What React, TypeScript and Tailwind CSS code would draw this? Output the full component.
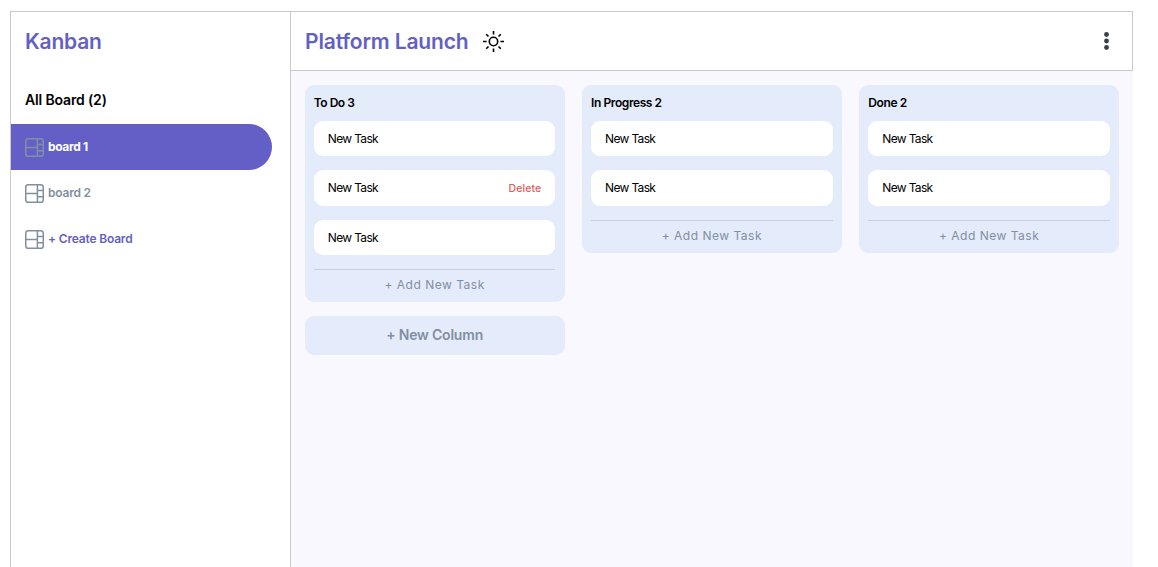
type Task = { title: string; deletable?: boolean };
type Column = {
  name: string;
  tasks: Task[];
  titleClass: string;
};

const columns: Column[] = [
  {
    name: 'To Do',
    tasks: [{ title: 'New Task' }, { title: 'New Task', deletable: true }, { title: 'New Task' }],
    titleClass: 'tracking-[-0.5px]',
  },
  {
    name: 'In Progress',
    tasks: [{ title: 'New Task' }, { title: 'New Task' }],
    titleClass: 'tracking-[-0.42px]',
  },
  {
    name: 'Done',
    tasks: [{ title: 'New Task' }, { title: 'New Task' }],
    titleClass: 'tracking-[-0.4px]',
  },
];

function BoardIcon() {
  return (
    <svg width="19" height="19" viewBox="0 0 19 19" fill="none" stroke="#828fa3" strokeWidth="1.5" className="shrink-0">
      <rect x="0.75" y="0.75" width="17.5" height="17.5" rx="2.6" />
      <path d="M12.4 0.75v17.5M0.75 9.5h11.65M12.4 6.4h5.85M12.4 12.7h5.85" />
    </svg>
  );
}

function SunIcon() {
  return (
    <svg width="21" height="21" viewBox="0 0 21 21" fill="none" stroke="#000" strokeWidth="1.6">
      <circle cx="10.5" cy="10.5" r="4.2" />
      <path d="M10.5 0v3.6M10.5 17.4V21M0 10.5h3.6M17.4 10.5H21M3.2 3.2l2.3 2.3M15.5 15.5l2.3 2.3M17.8 3.2l-2.3 2.3M5.5 15.5l-2.3 2.3" />
    </svg>
  );
}

function DotsIcon() {
  return (
    <svg width="5" height="18" viewBox="0 0 5 18" fill="#3b3f4d">
      <circle cx="2.5" cy="2.5" r="2.4" />
      <circle cx="2.5" cy="9" r="2.4" />
      <circle cx="2.5" cy="15.5" r="2.4" />
    </svg>
  );
}

function Sidebar() {
  return (
    <aside className="flex w-[281px] shrink-0 flex-col border-x border-t border-[#c9cacf] bg-white">
      <h1 className="mt-3.5 pl-3.5 text-[21px] leading-8 font-semibold tracking-[-0.2px] text-[#635fc7]">Kanban</h1>
      <h2 className="mt-8 pl-3.5 text-[14px] leading-5 font-semibold tracking-[-0.15px] text-black">All Board (2)</h2>
      <nav className="mt-3.5 flex flex-col text-[12px] font-semibold">
        <a className="flex h-[46px] w-[261px] items-center gap-1 rounded-r-full bg-[#635fc7] pl-3.5 font-bold tracking-[-0.35px] text-white">
          <BoardIcon />
          <span>board 1</span>
        </a>
        <a className="flex h-[46px] items-center gap-1 pl-3.5 tracking-[-0.2px] text-[#828fa3]">
          <BoardIcon />
          <span>board 2</span>
        </a>
        <a className="flex h-[46px] items-center gap-1 pl-3.5 tracking-[-0.18px] text-[#635fc7]">
          <BoardIcon />
          <span>+ Create Board</span>
        </a>
      </nav>
    </aside>
  );
}

function BoardColumn({ column }: { column: Column }) {
  return (
    <section className="rounded-[9px] bg-[#e4ebfa] px-[9.1px] pt-[9px]">
      <h3 className={`text-[12px] leading-[18px] font-semibold text-black ${column.titleClass}`}>
        {column.name} {column.tasks.length}
      </h3>
      <ul className="mt-[9px] flex flex-col gap-3.5">
        {column.tasks.map((task, i) => (
          <li key={i} className="flex h-[35.5px] items-center justify-between rounded-[9px] bg-white px-3.5">
            <span className="text-[12px] tracking-[-0.68px] text-black">{task.title}</span>
            {task.deletable && (
              <span className="pt-px text-[10.5px] font-medium tracking-[0.1px] text-[#e55c5c]">Delete</span>
            )}
          </li>
        ))}
      </ul>
      <button className="mt-3.5 block h-[33px] w-full border-t border-[#c8cfdf] pb-0.5 text-center text-[12px] tracking-[0.5px] text-[#828fa3]">
        + Add New Task
      </button>
    </section>
  );
}

export default function App() {
  return (
    <div className="flex h-screen overflow-hidden bg-white pt-[11px] pr-[25px] pl-2.5 font-['Inter','Liberation_Sans',sans-serif] [font-variant-ligatures:none]">
      <Sidebar />
      <main className="flex min-w-0 flex-1 flex-col bg-[#f9f8ff]">
        <header className="flex h-[60px] shrink-0 items-center justify-between border-y border-r border-[#c9cacf] bg-white pr-[23.5px] pl-3.5">
          <div className="flex items-center">
            <h2 className="w-[178px] pt-px text-[21px] leading-8 font-semibold tracking-[-0.15px] whitespace-nowrap text-[#635fc7]">
              Platform Launch
            </h2>
            <SunIcon />
          </div>
          <button aria-label="Board options">
            <DotsIcon />
          </button>
        </header>
        <div className="grid grid-cols-[259.75px_259.75px_259.75px] items-start gap-x-[17.5px] gap-y-3.5 pt-[13.75px] pl-[13.75px]">
          {columns.map((column) => (
            <BoardColumn key={column.name} column={column} />
          ))}
          <button className="h-[39px] rounded-[9px] bg-[#e4ebfa] pb-0.5 text-[14px] font-semibold tracking-[-0.2px] text-[#828fa3]">
            + New Column
          </button>
        </div>
      </main>
    </div>
  );
}
